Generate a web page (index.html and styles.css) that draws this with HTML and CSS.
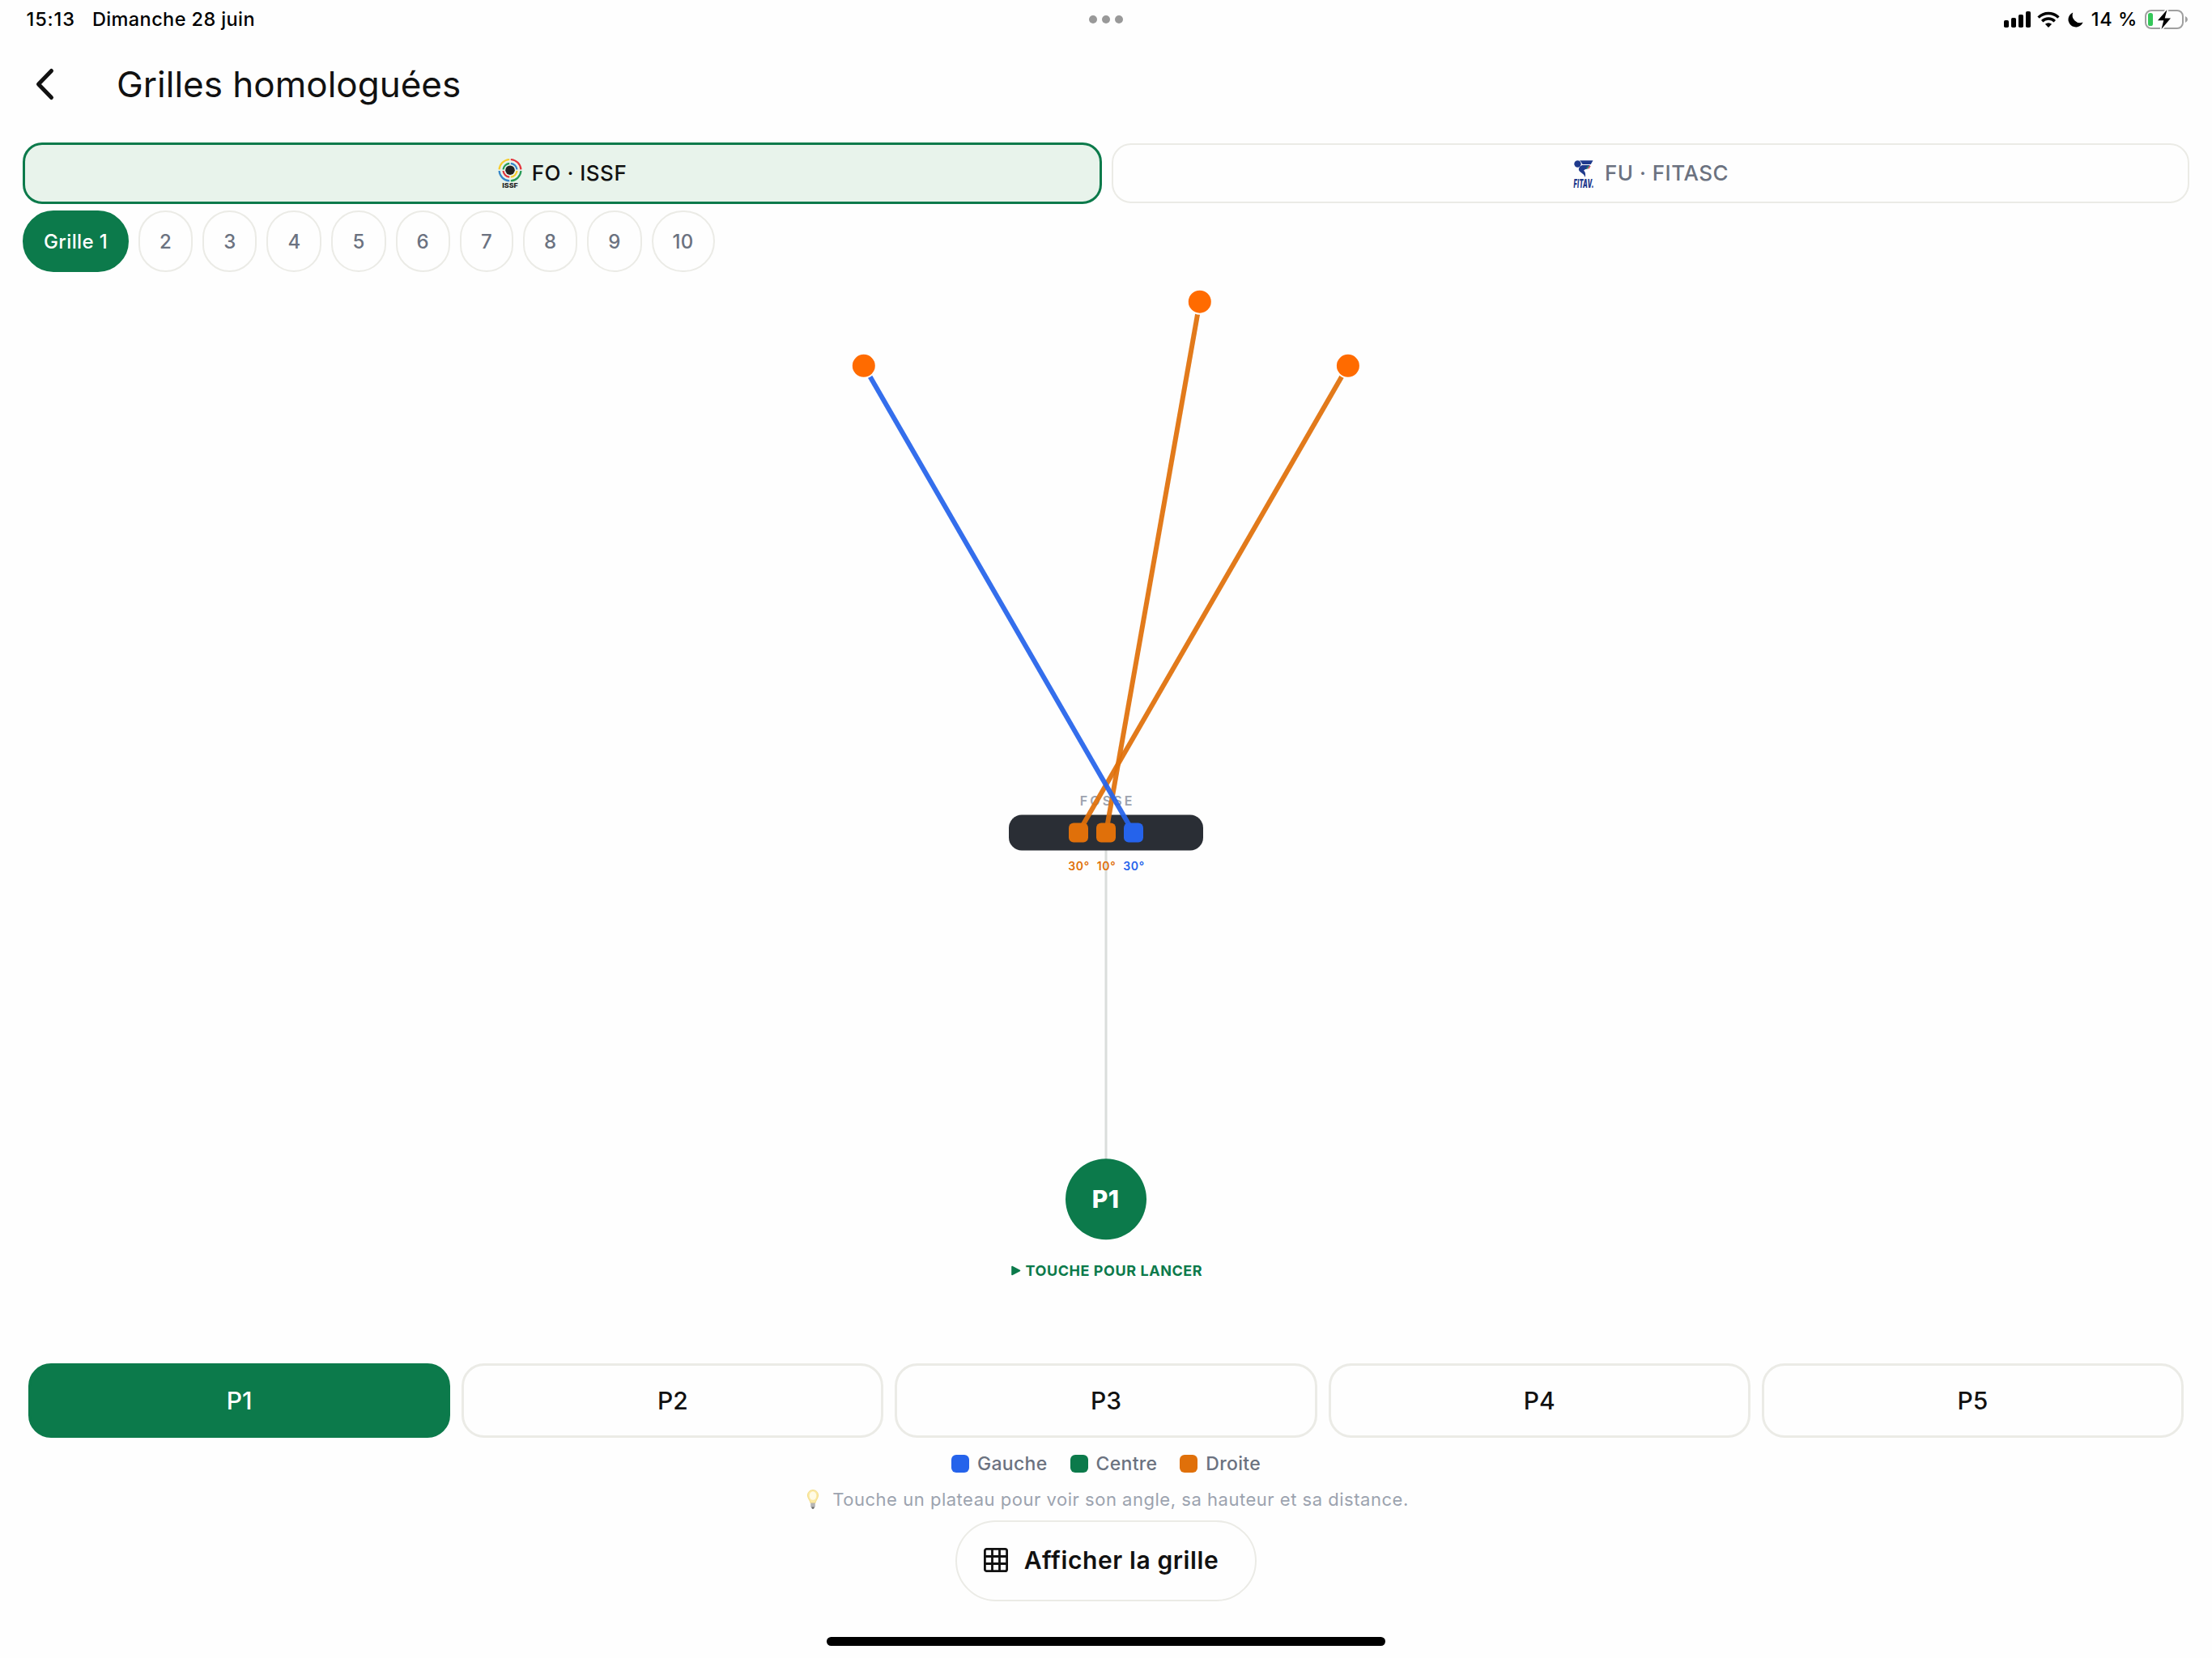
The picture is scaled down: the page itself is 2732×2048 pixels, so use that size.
FILE: index.html
```html
<!DOCTYPE html>
<html lang="fr">
<head>
<meta charset="utf-8">
<title>Grilles homologuées</title>
<link rel="stylesheet" href="styles.css">
</head>
<body>
<div class="screen">
  <header class="status">
    <div class="status-left"><span class="time">15:13</span><span class="date">Dimanche 28 juin</span></div>
    <div class="dots"><i></i><i></i><i></i></div>
    <div class="status-right">
      <svg class="signal" width="33" height="20" viewBox="0 0 33 20"><rect x="0" y="11" width="6" height="9" rx="1.8"/><rect x="9" y="8" width="6" height="12" rx="1.8"/><rect x="18" y="4" width="6" height="16" rx="1.8"/><rect x="27" y="0" width="6" height="20" rx="1.8"/></svg>
      <svg class="wifi" width="28" height="20" viewBox="0 0 28 20"><g fill="none" stroke="#000" stroke-width="3.4"><path d="M1.6 7.6A17.6 17.6 0 0 1 26.4 7.6"/><path d="M6.2 12.2A11 11 0 0 1 21.8 12.2"/></g><path d="M14 20l-4.1-4.2a5.9 5.9 0 0 1 8.2 0z"/></svg>
      <svg class="moon" width="19" height="19" viewBox="0 0 19 19"><path d="M6.2.4A9.4 9.4 0 1 0 18.6 12.6 9.6 9.6 0 0 1 6.2.4z"/></svg>
      <span class="percent">14 %</span>
      <svg class="battery" width="54" height="26" viewBox="0 0 54 26"><rect x="1" y="2" width="46" height="22" rx="7" fill="none" stroke="#9f9f9f" stroke-width="2"/><path d="M50 9q3 1.300 3 4t-3 4z" fill="#9f9f9f"/><rect x="4" y="5" width="6" height="16" rx="2.600" fill="#34c759"/><path d="M27.500 1L16 14.300h7.300L20.500 25 32 11.500h-7.300z" fill="#000" stroke="#fefefe" stroke-width="3.500" paint-order="stroke" stroke-linejoin="round"/></svg>
    </div>
  </header>

  <div class="titlebar">
    <svg class="back" width="24" height="40" viewBox="0 0 24 40"><path d="M20.500 3.500L4.500 20l16 16.500" fill="none" stroke="#111" stroke-width="5" stroke-linecap="round" stroke-linejoin="round"/></svg>
    <h1>Grilles homologuées</h1>
  </div>

  <nav class="tabs">
    <button class="tab tab-on">
      <svg class="logo" width="30" height="38" viewBox="0 0 30 38">
        <g fill="none" stroke-width="2.200">
          <path d="M14.200 2A13.200 13.200 0 0 0 1.600 14.400" stroke="#f6cb2c"/><path d="M15.800 2A13.200 13.200 0 0 1 28.400 14.400" stroke="#e3343c"/><path d="M28.400 16A13.200 13.200 0 0 1 15.800 28.400" stroke="#259b56"/><path d="M14.200 28.400A13.200 13.200 0 0 1 1.600 16" stroke="#3486c9"/>
          <path d="M14.200 6.800A8.500 8.500 0 0 0 6.500 14.400" stroke="#259b56"/><path d="M15.800 6.800A8.500 8.500 0 0 1 23.500 14.400" stroke="#3486c9"/><path d="M23.500 16A8.500 8.500 0 0 1 15.800 23.700" stroke="#f6cb2c"/><path d="M14.200 23.700A8.500 8.500 0 0 1 6.500 16" stroke="#e3343c"/>
        </g>
        <circle cx="15" cy="15.200" r="5.800" fill="#222"/>
        <text x="15" y="36.800" text-anchor="middle" textLength="19.500" lengthAdjust="spacingAndGlyphs" font-size="8.200" font-weight="800" fill="#222">ISSF</text>
      </svg>
      <span>FO · ISSF</span>
    </button>
    <button class="tab">
      <svg class="logo" width="28" height="38" viewBox="0 0 28 38">
        <g fill="#1f3a8c"><circle cx="6.500" cy="7.500" r="4.200"/><path d="M9 3.300h16.500l-2.700 4.700H12.500q-1-2.700-3.500-4.700z"/><path d="M12 9h9.800l-3 4.600q-3.800.4-4.800 2.200 3 2.200 1.800 8.200-1-3.500-4.200-5.300-4.600-2.600-3.600-5.700 1-3 4-4z"/></g>
        <path d="M17.500 13.500l2.300-3.500" stroke="#2a9a55" stroke-width="1.200"/><path d="M19.800 13.500l2.300-3.500" stroke="#dc3038" stroke-width="1.200"/>
        <text transform="translate(1.500 36.500) scale(.5 1)" textLength="50" font-size="14.500" font-weight="900" font-style="italic" fill="#1f3a8c">FITAV.</text>
      </svg>
      <span>FU · FITASC</span>
    </button>
  </nav>

  <div class="pills">
    <button class="pill pill-on">Grille 1</button><button class="pill">2</button><button class="pill">3</button><button class="pill">4</button><button class="pill">5</button><button class="pill">6</button><button class="pill">7</button><button class="pill">8</button><button class="pill">9</button><button class="pill">10</button>
  </div>

  <svg class="field" width="2732" height="1348" viewBox="0 336 2732 1348">
    <path d="M1366 1050V1432" stroke="#dadddb" stroke-width="3"/>
    <text class="fosse" x="1333.800" y="995">FOSSE</text>
    <rect x="1246" y="1006.500" width="240" height="44" rx="16" fill="#2a2e35"/>
    <g stroke-width="6" stroke-opacity=".93">
      <path d="M1332 1028.500L1664.900 451.800" stroke="#e0700a"/>
      <path d="M1366 1028.500L1481.800 372.700" stroke="#e0700a"/>
      <path d="M1400 1028.500L1066.800 451.800" stroke="#2563eb"/>
    </g>
    <g fill="#ff6b00" stroke="#fefefe" stroke-width="2"><circle cx="1066.800" cy="451.800" r="15"/><circle cx="1481.800" cy="372.700" r="15"/><circle cx="1664.900" cy="451.800" r="15"/></g>
    <rect x="1320" y="1016.500" width="24" height="24" rx="6" fill="#e0700a"/>
    <rect x="1354" y="1016.500" width="24" height="24" rx="6" fill="#e0700a"/>
    <rect x="1388" y="1016.500" width="24" height="24" rx="6" fill="#2563eb"/>
    <g class="angle"><text x="1332.500" y="1075" fill="#e0700a">30°</text><text x="1366.500" y="1075" fill="#e0700a">10°</text><text x="1400.500" y="1075" fill="#2563eb">30°</text></g>
    <circle cx="1366" cy="1481.300" r="50" fill="#0c7a4b"/>
    <text class="station" x="1365.700" y="1492">P1</text>
    <path d="M1250 1564.500v10l9.500-5z" fill="#0c7a4b" stroke="#0c7a4b" stroke-width="1.600" stroke-linejoin="round"/>
    <text class="launch" x="1266.500" y="1576">TOUCHE POUR LANCER</text>
  </svg>

  <div class="posts">
    <button class="post post-on">P1</button><button class="post">P2</button><button class="post">P3</button><button class="post">P4</button><button class="post">P5</button>
  </div>

  <div class="legend">
    <span class="key left">Gauche</span><span class="key mid">Centre</span><span class="key right">Droite</span>
  </div>

  <p class="hint">
    <svg width="14" height="24" viewBox="0 0 14 24"><path d="M7 .5C3 .5.500 3.500.500 7c0 4 3 6 3.500 9.500h6C10.500 13 13.500 11 13.500 7 13.500 3.500 11 .500 7 .500z" fill="#fbe9a4" stroke="#f3dc88"/><ellipse cx="7" cy="7.500" rx="4.300" ry="5.200" fill="#fffbe6"/><path d="M4.200 16.500h5.600v4.500L8.500 23h-3l-1.300-2z" fill="#b5b5b5"/><path d="M5.300 21.500h3.400L8 23.700H6z" fill="#666"/></svg>
    <span>Touche un plateau pour voir son angle, sa hauteur et sa distance.</span>
  </p>

  <button class="show">
    <svg width="30" height="30" viewBox="0 0 30 30"><g fill="none" stroke="#111" stroke-width="2.800"><rect x="1.400" y="1.400" width="27.200" height="27.200" rx="2.200"/><path d="M10.500 1v28M19.500 1v28M1 10.500h28M1 19.500h28"/></g></svg>
    <span>Afficher la grille</span>
  </button>

  <div class="home"></div>
</div>
</body>
</html>
```
FILE: styles.css
```css
* { box-sizing: border-box; }
body { margin: 0; background: #fefefe; color: #111; font-family: Inter, "Liberation Sans", sans-serif; }
button { margin: 0; padding: 0; background: none; font: inherit; color: inherit; }
svg { display: block; flex: none; overflow: visible; }
.screen { width: 2732px; height: 2048px; overflow: hidden; display: flex; flex-direction: column; }

.status { height: 48px; padding: 0 30px; display: grid; grid-template-columns: 1fr auto 1fr; align-items: center; font-size: 23.5px; font-weight: 500; color: #000; }
.status-left { display: flex; gap: 21px; padding: 0 0 1px 2.5px; letter-spacing: .4px; }
.time { letter-spacing: .9px; }
.dots { display: flex; gap: 6px; }
.dots i { width: 10px; height: 10px; border-radius: 50%; background: #999; }
.status-right { display: flex; justify-content: flex-end; align-items: center; margin-right: -1px; }
.wifi { margin-left: 8px; }
.moon { margin-left: 10px; }
.percent { margin: 0 9px 0 10px; padding-bottom: 1px; letter-spacing: .6px; }

.titlebar { height: 128px; padding: 0 0 16px 43px; display: flex; align-items: center; gap: 77px; }
h1 { margin: 0; font-size: 44px; line-height: 56px; font-weight: 400; }

.tabs { height: 76px; padding: 0 28px; display: flex; gap: 12px; align-items: center; }
.tab { flex: 1; height: 74px; border: 2px solid #ebebe6; border-radius: 24px; display: flex; align-items: center; justify-content: center; gap: 12px; font-size: 26px; font-weight: 500; letter-spacing: .5px; color: #6b7280; }
.tab span { padding-bottom: 1.5px; }
.logo { letter-spacing: 0; }
.tab-on { height: 76px; border: 3px solid #0c7a4b; background: #e8f3eb; color: #111; }

.pills { height: 84px; padding: 8px 28px 0; display: flex; gap: 12px; }
.pill { height: 76px; padding: 0 24px; border: 2px solid #ebebe6; border-radius: 38px; font-size: 24px; font-weight: 500; letter-spacing: .25px; color: #6b7280; }
.pill-on { background: #0c7a4b; border-color: #0c7a4b; color: #fff; letter-spacing: .37px; }

.fosse { font-size: 16px; font-weight: 600; letter-spacing: 3.1px; fill: #9ca3af; }
.angle { font-size: 14px; font-weight: 600; letter-spacing: .6px; text-anchor: middle; }
.station { font-size: 30px; font-weight: 800; letter-spacing: .6px; fill: #fff; text-anchor: middle; }
.launch { font-size: 18px; font-weight: 700; letter-spacing: .56px; fill: #0c7a4b; }

.posts { height: 92px; padding: 0 35px; display: flex; gap: 14px; }
.post { flex: 1; border: 3px solid #ebebe6; border-radius: 28px; font-size: 30px; font-weight: 500; }
.post-on { background: #0c7a4b; border-color: #0c7a4b; color: #fff; }

.legend { height: 64px; display: flex; justify-content: center; align-items: center; gap: 28px; font-size: 23px; font-weight: 500; letter-spacing: .3px; color: #6b7280; }
.key { display: flex; align-items: center; gap: 10px; }
.key::before { content: ""; width: 22px; height: 22px; border-radius: 6px; background: currentColor; }
.left::before { background: #2563eb; }
.mid::before { background: #0c7a4b; }
.right::before { background: #e0700a; }

.hint { height: 38px; margin: 0; padding: 0 0 14px 5px; display: flex; justify-content: center; align-items: center; gap: 17px; font-size: 22px; color: #9ca3af; letter-spacing: .52px; }

.show { align-self: center; width: 372px; height: 100px; padding: 0 12px 2px 0; border: 2px solid #ebebe6; border-radius: 50px; display: flex; align-items: center; justify-content: center; gap: 20px; font-size: 30px; font-weight: 600; letter-spacing: .6px; }

.home { align-self: center; width: 690px; height: 11px; margin-top: 44px; border-radius: 6px; background: #000; }
```
